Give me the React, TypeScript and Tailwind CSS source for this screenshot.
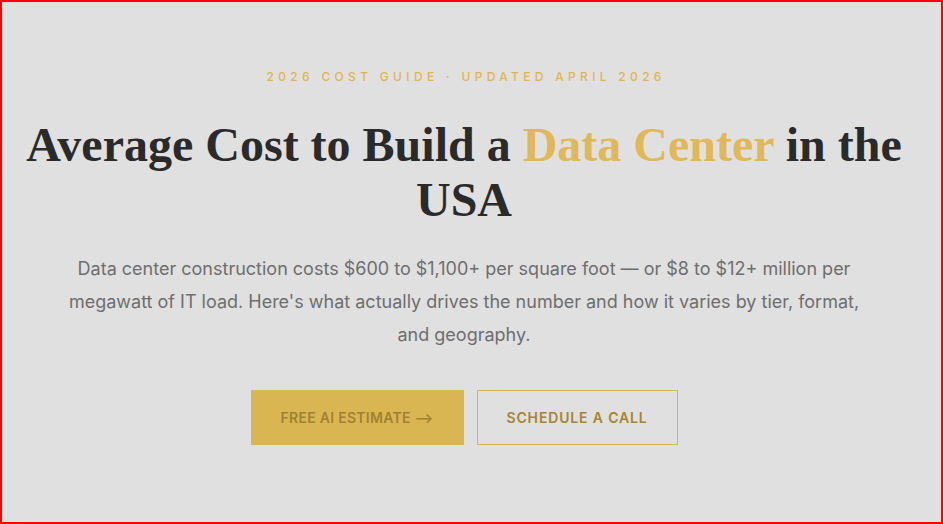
import React from 'react';

export default function App() {
  return (
    <div className="w-full h-[524px] bg-[#e0e0e0] border-2 border-[#ff0000] pr-[15px] flex flex-col items-center overflow-hidden">
      <p className="mt-[66px] pl-[0.36em] text-[12px] tracking-[0.36em] font-medium text-[#e2b54c] uppercase font-['Inter',sans-serif]">
        2026 Cost Guide · Updated April 2026
      </p>

      <h1 className="mt-[31px] max-w-[900px] text-center text-[48px] leading-[55px] font-bold text-[#2a2a2a] font-['Liberation_Serif',serif]">
        Average Cost to Build a <span className="text-[#e0b857]">Data Center</span> in the USA
      </h1>

      <p className="mt-[25px] max-w-[800px] text-center text-[18px] leading-[33px] text-[#6e6e6e] font-['Inter',sans-serif]">
        Data center construction costs $600 to $1,100+ per square foot — or $8 to $12+ million per megawatt of IT load. Here's what actually drives the number and how it varies by tier, format, and geography.
      </p>

      <div className="mt-[39px] flex gap-[13px] font-['Inter',sans-serif]">
        <button className="w-[213px] h-[55px] bg-[#dab653] text-[#9f8230] text-[14px] font-semibold tracking-[0.02em] uppercase">
          Free AI Estimate ⟶
        </button>
        <button className="w-[201px] h-[55px] border border-[#d9b54e] text-[#a58530] text-[14px] font-semibold tracking-[0.06em] uppercase">
          Schedule a Call
        </button>
      </div>
    </div>
  );
}
